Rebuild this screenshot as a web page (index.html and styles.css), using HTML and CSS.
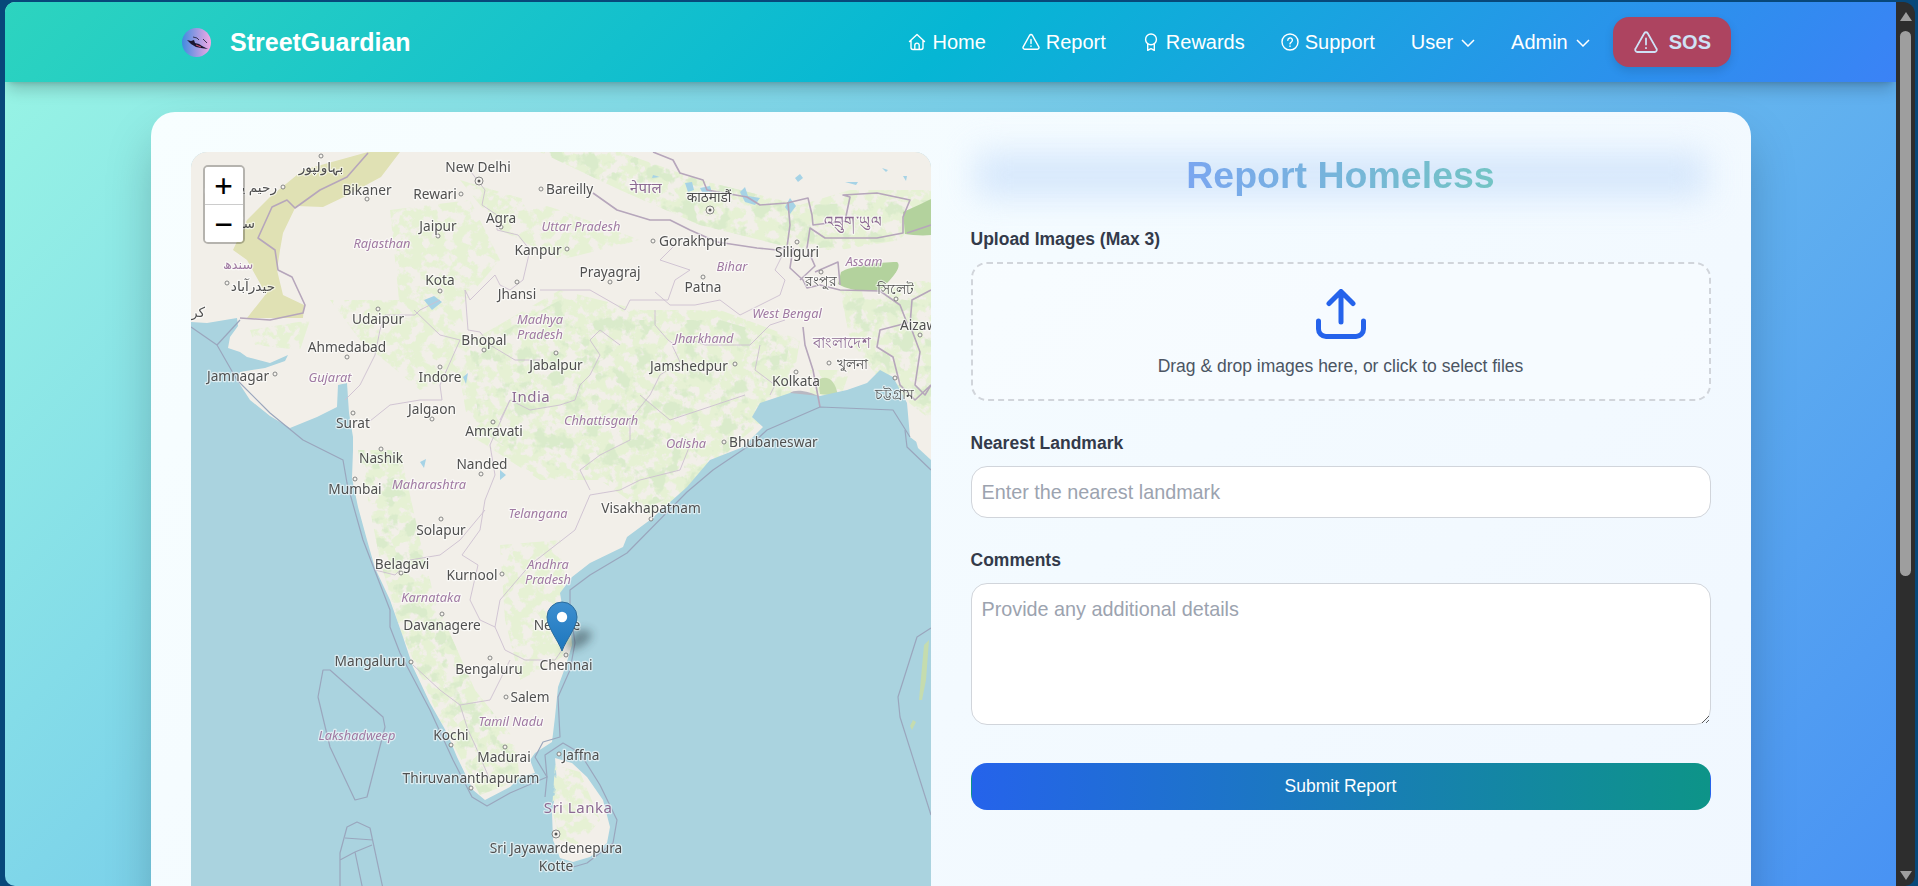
FILE: index.html
```html
<!DOCTYPE html>
<html>
<head>
    <meta name="viewport" content="width=device-width, initial-scale=1.0">
    <title>StreetGuardian</title>
    <link rel="stylesheet" href="styles.css">
</head>
<body>
<div class="window">
    <div class="page">
        <header class="navbar">
            <div class="brand">
                <svg class="brand-logo" viewBox="0 0 29 29">
                    <defs>
                        <linearGradient id="logoBg" x1="0" y1="0" x2="1" y2="0">
                            <stop offset="0" stop-color="#3f8be0"/>
                            <stop offset="1" stop-color="#f4a8e4"/>
                        </linearGradient>
                    </defs>
                    <circle cx="14.5" cy="14.5" r="14.5" fill="url(#logoBg)"/>
                    <path d="M5 12 L9 13 L12 12 L13 15 L17 16 L20 18 L26 21 L19 20 L14 19 L9 16 Z" fill="#1b1730"/>
                    <path d="M11 9 L15 10 L17 12 M21 11 L25 15" stroke="#1b1730" stroke-width="0.8" fill="none"/>
                    <path d="M14 17 L19 19" stroke="#c9486b" stroke-width="1"/>
                </svg>
                <span class="brand-name">StreetGuardian</span>
            </div>
            <nav class="nav-links">
                <a class="nav-link">
                    <svg class="nav-icon" viewBox="0 0 18 18"><path d="M1.5 8.5 9 1.5l7.5 7M3 7v7.5a2 2 0 0 0 2 2h8a2 2 0 0 0 2-2V7M6.8 16.5v-4.2a2.2 2.2 0 0 1 4.4 0v4.2"/></svg>
                    Home
                </a>
                <a class="nav-link">
                    <svg class="nav-icon" viewBox="0 0 18 18"><path d="M7.6 2.4 1.2 13.8a1.6 1.6 0 0 0 1.4 2.4h12.8a1.6 1.6 0 0 0 1.4-2.4L10.4 2.4a1.6 1.6 0 0 0-2.8 0ZM9 6.5v4M9 13v.4"/></svg>
                    Report
                </a>
                <a class="nav-link">
                    <svg class="nav-icon" viewBox="0 0 18 18"><circle cx="9" cy="6.4" r="5.4"/><path d="M5.7 10.8v6.6l3.3-1.8 3.3 1.8v-6.6"/></svg>
                    Rewards
                </a>
                <a class="nav-link">
                    <svg class="nav-icon" viewBox="0 0 18 18"><circle cx="9" cy="9" r="8"/><path d="M6.8 7.2a2.3 2.3 0 1 1 3.3 2.1c-.7.4-1.1.8-1.1 1.6M9 13v.4"/></svg>
                    Support
                </a>
                <a class="nav-link menu">
                    User
                    <svg class="chevron" viewBox="0 0 14 8"><path d="M1 1l6 6 6-6"/></svg>
                </a>
                <a class="nav-link menu">
                    Admin
                    <svg class="chevron" viewBox="0 0 14 8"><path d="M1 1l6 6 6-6"/></svg>
                </a>
                <button class="sos">
                    <svg class="sos-icon" viewBox="0 0 24 22"><path d="M10.3 2.2 1.6 17.6A2.2 2.2 0 0 0 3.5 21h17a2.2 2.2 0 0 0 1.9-3.4L13.7 2.2a2 2 0 0 0-3.4 0ZM12 7.5v6M12 16.8v.4"/></svg>
                    SOS
                </button>
            </nav>
        </header>

        <main class="content">
            <div class="card">
                <div class="map">
                    <svg class="map-svg" viewBox="191 152 740 760">
                        <defs>
                            <filter id="patchy" x="0" y="0" width="100%" height="100%">
                                <feTurbulence type="fractalNoise" baseFrequency="0.09" numOctaves="4" seed="7" result="n"/>
                                <feColorMatrix in="n" type="matrix" values="0 0 0 0 0.79  0 0 0 0 0.88  0 0 0 0 0.66  8 0 0 0 -3.3" result="g"/>
                                <feComposite in="g" in2="SourceAlpha" operator="in"/>
                            </filter>
                            <filter id="patchyDark" x="0" y="0" width="100%" height="100%">
                                <feTurbulence type="fractalNoise" baseFrequency="0.06" numOctaves="4" seed="23" result="n"/>
                                <feColorMatrix in="n" type="matrix" values="0 0 0 0 0.70  0 0 0 0 0.83  0 0 0 0 0.60  9 0 0 0 -4.9" result="g"/>
                                <feComposite in="g" in2="SourceAlpha" operator="in"/>
                            </filter>
                            <filter id="soft"><feGaussianBlur stdDeviation="0.5"/></filter>
                            <filter id="softText"><feGaussianBlur stdDeviation="0.25"/></filter>
                        </defs>
                        <rect x="191" y="152" width="740" height="760" fill="#f2efe9"/>

                        <g filter="url(#soft)">
                            <path class="desert" d="M368 152 L400 152 L381 177 L346 196 L323 207 L296 206 L283 233 L280 250 L277 270 L283 295 L304 305 L303 318 L247 318 L266 294 L247 260 L233 250 L247 220 L270 197 L303 170 Z"/>

                            <g filter="url(#patchy)">
                                <path d="M540 152 L620 190 L700 225 L800 250 L840 250 L900 240 L931 200 L931 190 L850 190 L800 205 L700 180 L620 152 Z"/>
                                <path d="M455 350 L560 290 L640 310 L720 310 L800 340 L790 400 L740 440 L690 490 L650 515 L600 480 L540 480 L470 435 Z"/>
                                <path d="M358 450 L400 450 L420 540 L435 600 L475 690 L515 740 L520 780 L480 795 L440 720 L400 630 L380 560 Z"/>
                                <path d="M500 545 L560 540 L575 650 L520 680 L505 620 Z"/>
                                <path d="M390 210 L470 200 L500 260 L440 330 L400 310 Z"/>
                                <path d="M840 290 L931 280 L931 420 L880 380 L850 340 Z"/>
                                <path d="M810 370 L850 370 L840 400 L810 400 Z"/>
                                <path d="M555 760 L590 770 L605 830 L565 850 L552 810 Z"/>
                                <path d="M250 330 L310 320 L300 350 L255 345 Z"/>
                                <path d="M330 300 L460 300 L470 370 L420 390 L360 340 Z"/>
                                <path d="M460 180 L560 210 L640 240 L560 260 L500 230 Z"/>
                            </g>
                            <g filter="url(#patchyDark)">
                                <path d="M540 152 L620 190 L700 225 L800 250 L900 240 L931 200 L800 205 L700 180 L620 152 Z"/>
                                <path d="M470 350 L560 300 L640 320 L720 320 L790 340 L780 400 L740 440 L690 490 L640 510 L600 470 L540 470 L480 430 Z"/>
                                <path d="M358 450 L400 450 L420 540 L435 600 L475 690 L515 740 L520 780 L480 795 L440 720 L400 630 L380 560 Z"/>
                                <path d="M840 300 L931 290 L931 420 L880 380 Z"/>
                            </g>

                            <path class="forest" d="M841 272 C850 266 880 262 897 262 C902 266 895 276 880 290 C865 292 850 291 838 284 Z"/>
                            <path class="forest" d="M903 212 C912 208 925 202 931 199 L931 235 C922 236 912 235 905 234 Z"/>
                            <path class="mangrove" d="M790 393 C795 388 812 392 818 396 L816 402 C806 400 796 400 790 399 Z"/>
                            <path class="forest light" d="M818 380 C826 375 835 378 838 396 L820 394 Z"/>

                            <path class="lake" d="M795 178 L800 174 L803 178 L798 182 Z M740 192 L745 187 L748 196 L760 198 L755 205 L745 202 Z M700 188 L710 186 L712 192 L702 192 Z M785 207 L790 198 L796 206 L790 214 Z M882 168 L888 170 L886 172 Z M845 182 L858 182 L856 185 Z M903 176 L907 176 L906 181 Z M653 175 L660 177 L652 178 Z M685 183 L692 182 L694 190 L688 192 Z M424 300 L434 296 L442 302 L432 310 Z M463 377 L468 373 L466 384 Z M420 462 L426 459 L424 468 Z M558 368 Z M500 470 L506 475 L500 480 Z"/>

                            <!-- sea -->
                            <path class="sea" d="M191 322 L207 323 L237 318 L238 326 L230 337 L228 348 L240 352 L247 357 L270 363 L288 355 L285 361 L265 368 L240 372 L237 380 L250 400 L270 416 L290 428 L317 417 L337 407 L338 385 L347 383 L349 413 L353 437 L353 450 L352 478 L358 507 L367 540 L375 568 L390 600 L403 637 L413 667 L430 703 L447 733 L457 757 L473 790 L485 800 L510 787 L520 777 L535 773 L530 760 L535 753 L552 742 L555 717 L558 687 L566 665 L572 645 L570 620 L562 605 L560 593 L572 577 L590 563 L623 547 L627 537 L650 520 L687 487 L710 460 L743 447 L763 427 L752 417 L760 403 L790 393 L820 396 L847 390 L867 383 L880 370 L893 377 L907 403 L910 437 L927 450 L931 455 L931 912 L191 912 Z"/>
                            <path class="land" d="M555 758 L572 763 L587 777 L603 800 L610 827 L607 843 L590 857 L573 862 L560 858 L553 840 L552 813 L557 783 Z"/>
                            <path class="land" d="M913 430 L931 430 L931 460 L918 448 Z"/>

                            <g filter="url(#patchy)">
                                <path d="M555 765 L580 772 L600 820 L580 845 L560 840 L552 810 Z"/>
                            </g>
                            <path class="forest light" d="M924 645 L929 640 L926 680 L922 700 L919 700 Z M913 720 L916 722 L912 730 L910 726 Z"/>

                            <!-- country borders -->
                            <path class="border" d="M368 153 L347 177 L320 190 L295 208 L287 200 L272 207 L258 238 L275 250 L278 270 L292 277 L305 305 L303 313 L270 320 L240 318"/>
                            <path class="border" d="M653 152 L673 160 L680 173 L703 180 L707 190 L747 197 L760 205 L787 203 L808 198 L812 215 L813 225 L845 221 L850 197 L843 195 L877 193 L910 200 L903 217 L903 233 L877 238 L825 238 L810 228 L807 248 L815 266 L800 280"/>
                            <path class="border" d="M593 193 L617 210 L650 220 L670 220 L690 230 L717 242 L757 248 L777 250 L787 247 L790 225 L788 203"/>
                            <path class="border" d="M793 248 L790 268 L803 280 L807 288 L820 285 L840 290 L880 291 L900 305 L907 323 L880 330 L877 347 L893 357 L900 385 L915 400 L931 385"/>
                            <path class="border" d="M815 272 L838 262 L840 285"/>
                            <path class="border" d="M803 327 L805 345 L813 370 L820 407"/>
                            <path class="border" d="M907 233 L931 225 M931 290 L912 300 L910 325 L920 352 L915 385 L925 395 L931 385"/>

                            <!-- state borders -->
                            <path class="state" d="M468 168 L485 190 L482 205 L497 215 L497 230 L518 235 L530 250 L523 280 L510 290 L500 285 L495 275 L470 300 L465 290 L468 330 L480 332 L490 345 L515 360 L540 360"/>
                            <path class="state" d="M414 310 L440 335 L460 340 L440 385 L442 400 L420 400 L390 405 L365 425"/>
                            <path class="state" d="M345 400 L360 385 L375 355 L380 330 L385 315 L415 315 L420 310 L440 300"/>
                            <path class="state" d="M540 290 L575 290 L590 290 L625 310 L630 300 L668 300 L675 280 L690 270 L660 260 L675 245"/>
                            <path class="state" d="M655 292 L670 305 L695 305 L720 300 L740 315 L780 295 L785 280 L775 270 L785 250"/>
                            <path class="state" d="M655 310 L655 325 L668 340 L675 345 L678 335 L705 345 L750 345 L770 325 L785 320"/>
                            <path class="state" d="M760 345 L755 370 L775 385 L770 395"/>
                            <path class="state" d="M620 345 L600 330 L590 340 L600 355 L590 375 L580 385 L575 400 L560 405 L530 410 L510 400 L500 420"/>
                            <path class="state" d="M672 345 L680 362 L660 375 L650 395 L630 420 L630 440 L600 455 L580 470 L590 490"/>
                            <path class="state" d="M640 395 L670 420 L700 410 L730 400 L745 395"/>
                            <path class="state" d="M510 400 L490 445 L495 475 L485 500 L480 530 L462 555 L478 565 L470 600 L480 620 L495 627 L500 600 L530 565 L575 530 L590 495 L620 490 L640 480 L680 470 L690 445"/>
                            <path class="state" d="M495 627 L505 650 L525 660 L555 660 L562 650"/>
                            <path class="state" d="M375 570 L395 575 L410 560 L440 555 L460 540 L485 510"/>
                            <path class="state" d="M413 665 L440 690 L460 705 L490 700 L510 660"/>
                            <path class="state" d="M460 705 L468 730 L475 745 L490 780"/>

                            <!-- maritime lines -->
                            <path class="sealine" d="M191 327 L217 345 L237 380 L270 413 L303 440 L343 460 L347 483 L363 540 L390 610 L390 627 L400 653 L430 710 L453 760 L472 797 L487 806 L510 793 L547 777 L535 757 L543 742 L560 737 L558 697 L570 670 L575 643 L570 607 L570 590 L590 575 L627 553 L687 492 L713 470 L753 443 L767 430 L820 407 L893 410 L910 437"/>
                            <path class="sealine" d="M217 345 L240 320"/>
                            <path class="sealine" d="M547 777 L545 755 L563 743 L580 753 L600 785 L617 820 L613 843 L587 863 L563 870 M547 777 L545 797"/>
                            <path class="sealine" d="M318 697 L323 670 L330 670 L383 717 L385 727 L367 797 L355 800 L330 747 Z"/>
                            <path class="sealine" d="M340 912 L340 853 L347 827 L357 822 L370 828 L388 912 M345 838 L373 840 M340 860 L355 852 L372 845 M355 852 L365 900"/>
                            <path class="sealine" d="M931 628 L917 637 L898 697 L900 717 L931 815 M905 430 L907 447 L931 470"/>
                        </g>

                        <g class="dots">
                            <circle cx="479" cy="181" r="4"/><circle cx="479" cy="181" r="1.5" class="fill"/>
                            <circle cx="367" cy="199" r="2"/><circle cx="461" cy="194" r="2"/><circle cx="541" cy="189" r="2"/>
                            <circle cx="438" cy="236" r="2"/><circle cx="501" cy="227" r="2"/><circle cx="567" cy="249" r="2"/>
                            <circle cx="610" cy="282" r="2"/><circle cx="440" cy="291" r="2"/><circle cx="517" cy="282" r="2"/>
                            <circle cx="378" cy="309" r="2"/><circle cx="347" cy="357" r="2"/><circle cx="484" cy="350" r="2"/>
                            <circle cx="556" cy="353" r="2"/><circle cx="440" cy="367" r="2"/><circle cx="275" cy="374" r="2"/>
                            <circle cx="432" cy="419" r="2"/><circle cx="353" cy="413" r="2"/><circle cx="493" cy="422" r="2"/>
                            <circle cx="381" cy="449" r="2"/><circle cx="481" cy="474" r="2"/><circle cx="355" cy="479" r="2"/>
                            <circle cx="441" cy="519" r="2"/><circle cx="401" cy="573" r="2"/><circle cx="502" cy="574" r="2"/>
                            <circle cx="442" cy="614" r="2"/><circle cx="411" cy="662" r="2"/><circle cx="490" cy="658" r="2"/>
                            <circle cx="566" cy="655" r="2"/><circle cx="506" cy="697" r="2"/><circle cx="451" cy="745" r="2"/>
                            <circle cx="505" cy="747" r="2"/><circle cx="559" cy="754" r="2"/><circle cx="471" cy="788" r="2"/>
                            <circle cx="556" cy="834" r="4"/><circle cx="556" cy="834" r="1.5" class="fill"/>
                            <circle cx="651" cy="519" r="2"/><circle cx="724" cy="442" r="2"/>
                            <circle cx="710" cy="210" r="4"/><circle cx="710" cy="210" r="1.5" class="fill"/>
                            <circle cx="653" cy="241" r="2"/><circle cx="797" cy="242" r="2"/><circle cx="703" cy="277" r="2"/>
                            <circle cx="821" cy="272" r="2"/><circle cx="896" cy="299" r="2"/><circle cx="920" cy="335" r="2"/>
                            <circle cx="735" cy="364" r="2"/><circle cx="829" cy="363" r="2"/><circle cx="796" cy="372" r="2"/>
                            <circle cx="895" cy="378" r="2"/><circle cx="321" cy="156" r="2"/><circle cx="283" cy="187" r="2"/>
                            <circle cx="227" cy="283" r="2"/>
                        </g>

                        <g class="cities" filter="url(#softText)">
                            <text x="478" y="172">New Delhi</text>
                            <text x="367" y="195">Bikaner</text>
                            <text x="435" y="199">Rewari</text>
                            <text x="546" y="194" class="start">Bareilly</text>
                            <text x="438" y="231">Jaipur</text>
                            <text x="501" y="223">Agra</text>
                            <text x="538" y="255">Kanpur</text>
                            <text x="610" y="277">Prayagraj</text>
                            <text x="440" y="285">Kota</text>
                            <text x="517" y="299">Jhansi</text>
                            <text x="378" y="324">Udaipur</text>
                            <text x="347" y="352">Ahmedabad</text>
                            <text x="484" y="345">Bhopal</text>
                            <text x="556" y="370">Jabalpur</text>
                            <text x="440" y="382">Indore</text>
                            <text x="238" y="381">Jamnagar</text>
                            <text x="432" y="414">Jalgaon</text>
                            <text x="353" y="428">Surat</text>
                            <text x="494" y="436">Amravati</text>
                            <text x="381" y="463">Nashik</text>
                            <text x="482" y="469">Nanded</text>
                            <text x="355" y="494">Mumbai</text>
                            <text x="441" y="535">Solapur</text>
                            <text x="402" y="569">Belagavi</text>
                            <text x="472" y="580">Kurnool</text>
                            <text x="442" y="630">Davanagere</text>
                            <text x="557" y="630">Nellore</text>
                            <text x="370" y="666">Mangaluru</text>
                            <text x="489" y="674">Bengaluru</text>
                            <text x="566" y="670">Chennai</text>
                            <text x="530" y="702">Salem</text>
                            <text x="451" y="740">Kochi</text>
                            <text x="504" y="762">Madurai</text>
                            <text x="581" y="760">Jaffna</text>
                            <text x="471" y="783">Thiruvananthapuram</text>
                            <text x="556" y="853">Sri Jayawardenepura</text>
                            <text x="556" y="871">Kotte</text>
                            <text x="651" y="513">Visakhapatnam</text>
                            <text x="729" y="447" class="start">Bhubaneswar</text>
                            <text x="709" y="202">काठमाडौं</text>
                            <text x="659" y="246" class="start">Gorakhpur</text>
                            <text x="797" y="257">Siliguri</text>
                            <text x="703" y="292">Patna</text>
                            <text x="821" y="286">রংপুর</text>
                            <text x="895" y="294">সিলেট</text>
                            <text x="900" y="330" class="start">Aizawl</text>
                            <text x="689" y="371">Jamshedpur</text>
                            <text x="837" y="369" class="start">খুলনা</text>
                            <text x="796" y="386">Kolkata</text>
                            <text x="894" y="399">চট্টগ্রাম</text>
                            <text x="321" y="172">بہاولپور</text>
                            <text x="277" y="192" class="end">رحیم یار خان</text>
                            <text x="255" y="228" class="end">سکھر</text>
                            <text x="253" y="291">حیدرآباد</text>
                            <text x="205" y="317" class="end">کراچی</text>
                        </g>

                        <g class="regions" filter="url(#softText)">
                            <text x="382" y="248">Rajasthan</text>
                            <text x="581" y="231">Uttar Pradesh</text>
                            <text x="540" y="324">Madhya</text>
                            <text x="540" y="339">Pradesh</text>
                            <text x="330" y="382">Gujarat</text>
                            <text x="601" y="425">Chhattisgarh</text>
                            <text x="429" y="489">Maharashtra</text>
                            <text x="538" y="518">Telangana</text>
                            <text x="548" y="569">Andhra</text>
                            <text x="548" y="584">Pradesh</text>
                            <text x="431" y="602">Karnataka</text>
                            <text x="511" y="726">Tamil Nadu</text>
                            <text x="357" y="740">Lakshadweep</text>
                            <text x="686" y="448">Odisha</text>
                            <text x="732" y="271">Bihar</text>
                            <text x="864" y="266">Assam</text>
                            <text x="787" y="318">West Bengal</text>
                            <text x="704" y="343">Jharkhand</text>
                            <text x="238" y="269" class="plain">سندھ</text>
                        </g>

                        <g class="countries" filter="url(#softText)">
                            <text x="531" y="402">India</text>
                            <text x="578" y="813">Sri Lanka</text>
                            <text x="646" y="193">नेपाल</text>
                            <text x="842" y="348">বাংলাদেশ</text>
                            <text x="853" y="227">འབྲུག་ཡུལ</text>
                        </g>
                    </svg>

                    <div class="zoom-box">
                        <a class="zoom-btn">+</a>
                        <a class="zoom-btn">&#x2212;</a>
                    </div>

                    <svg class="marker" viewBox="0 0 60 52">
                        <defs>
                            <linearGradient id="pinFill" x1="0" y1="0" x2="0" y2="1">
                                <stop offset="0" stop-color="#3d8fd0"/>
                                <stop offset="1" stop-color="#1d76bd"/>
                            </linearGradient>
                            <filter id="pinShadow" x="-80%" y="-80%" width="260%" height="260%"><feGaussianBlur stdDeviation="5"/></filter>
                        </defs>
                        <path d="M17 50 L30 30 Q44 26 46 34 Q40 48 17 50Z" fill="#1c2a30" opacity="0.45" filter="url(#pinShadow)"/>
                        <path d="M16 50 C12 39 1 26 1 16 A15 15 0 0 1 31 16 C31 26 20 39 16 50 Z" fill="url(#pinFill)" stroke="#2c6c9c" stroke-width="1"/>
                        <circle cx="16" cy="16" r="5.2" fill="#fff"/>
                    </svg>
                </div>

                <div class="form-col">
                    <h1 class="form-title"><span>Report Homeless</span></h1>

                    <label class="field-label">Upload Images (Max 3)</label>
                    <div class="dropzone">
                        <svg class="upload-icon" viewBox="0 0 50 50">
                            <path d="M2.5 32v8a7.5 7.5 0 0 0 7.5 7.5h30a7.5 7.5 0 0 0 7.5-7.5v-8M25 33V3M13 14.5 25 2.5l12 12"/>
                        </svg>
                        <p class="drop-text">Drag &amp; drop images here, or click to select files</p>
                    </div>

                    <label class="field-label">Nearest Landmark</label>
                    <input class="text-input" type="text" placeholder="Enter the nearest landmark">

                    <label class="field-label">Comments</label>
                    <textarea class="text-area" placeholder="Provide any additional details"></textarea>

                    <button class="submit-btn">Submit Report</button>
                </div>
            </div>
        </main>
    </div>

    <div class="scrollbar">
        <div class="arrow-up"></div>
        <div class="thumb"></div>
        <div class="arrow-down"></div>
    </div>
</div>
</body>
</html>
```

FILE: styles.css
```css
html, body {
    margin: 0;
    height: 100%;
    overflow: hidden;
}
body {
    background-color: #07487a;
    font-family: "Liberation Sans", Arial, sans-serif;
}
.window {
    display: flex;
    height: 884px;
    margin: 2px 3px 0 5px;
    border-radius: 10px 12px 10px 10px;
    overflow: hidden;
}
.page {
    flex: 1;
    min-width: 0;
    overflow: hidden;
    height: 1345px;
    background: linear-gradient(135deg, #99f6e4, #3b82f6);
}

/* nav */
.navbar {
    position: relative;
    z-index: 2;
    display: flex;
    align-items: center;
    justify-content: space-between;
    height: 80px;
    padding: 0 165px 0 177px;
    background: linear-gradient(135deg, #2dd4bf, #06b6d4, #3b82f6);
    box-shadow: 0 10px 15px -3px rgba(0,0,0,0.2), 0 4px 6px -4px rgba(0,0,0,0.2);
}
.brand {
    display: flex;
    align-items: center;
    gap: 19px;
}
.brand-logo {
    width: 29px;
    height: 29px;
}
.brand-name {
    color: #fff;
    font-size: 25px;
    font-weight: bold;
}
.nav-links {
    display: flex;
    align-items: center;
    gap: 36px;
}
.nav-link {
    display: flex;
    align-items: center;
    gap: 6px;
    color: #fff;
    font-size: 20px;
}
.nav-icon {
    width: 18px;
    height: 18px;
    fill: none;
    stroke: #fff;
    stroke-width: 1.4;
    stroke-linecap: round;
    stroke-linejoin: round;
}
.nav-link.menu {
    gap: 8px;
}
.chevron {
    width: 14px;
    height: 8px;
    margin-top: 2px;
    fill: none;
    stroke: #fff;
    stroke-width: 1.5;
}
.sos {
    display: flex;
    align-items: center;
    gap: 11px;
    height: 50px;
    margin-left: -13px;
    padding: 0 20px 0 21px;
    border: none;
    border-radius: 16px;
    background-color: #ad4460;
    box-shadow: 0 4px 10px rgba(0,0,0,0.12);
    color: #cfe2f6;
    font-family: inherit;
    font-size: 20px;
    font-weight: bold;
}
.sos-icon {
    width: 24px;
    height: 22px;
    fill: none;
    stroke: #cfe2f6;
    stroke-width: 1.8;
    stroke-linecap: round;
    stroke-linejoin: round;
}

/* card */
.content {
    padding-top: 30px;
}
.card {
    display: grid;
    grid-template-columns: 1fr 1fr;
    gap: 40px;
    width: 1600px;
    height: 1180px;
    box-sizing: border-box;
    margin: 0 auto;
    padding: 40px;
    border-radius: 24px;
    background: linear-gradient(135deg, #f7feff, #eff6ff);
    box-shadow: 0 25px 50px -6px rgba(0,0,0,0.25);
}

/* map */
.map {
    position: relative;
    height: 760px;
    border-radius: 16px;
    overflow: hidden;
    background-color: #aad3df;
}
.map-svg {
    display: block;
    width: 740px;
    height: 760px;
}
.desert { fill: #e0e1b4; }
.forest { fill: #b3d29d; }
.forest.light { fill: #c5dcae; }
.mangrove { fill: #b9b8c2; }
.lake { fill: #a6d3e6; }
.sea { fill: #aad3df; }
.land { fill: #f2efe9; }
.border {
    fill: none;
    stroke: #b6a6bb;
    stroke-width: 1.6;
    stroke-linejoin: round;
}
.state {
    fill: none;
    stroke: #cdbfd0;
    stroke-width: 0.9;
    stroke-linejoin: round;
}
.sealine {
    fill: none;
    stroke: #9aa6bd;
    stroke-width: 1.2;
    stroke-linejoin: round;
}
.dots circle {
    fill: #f6f4ef;
    stroke: #7b7b7b;
    stroke-width: 0.9;
}
.dots circle.fill {
    fill: #555;
    stroke: none;
}
.cities text, .regions text, .countries text {
    text-anchor: middle;
    paint-order: stroke;
    stroke: rgba(255,255,255,0.6);
    stroke-width: 2.4px;
    stroke-linejoin: round;
}
.cities text {
    fill: #505050;
    font: 13.7px "Noto Sans", "DejaVu Sans", sans-serif;
}
.cities text.start { text-anchor: start; }
.cities text.end { text-anchor: end; }
.regions text {
    fill: #a07aa3;
    font: italic 12.8px "Noto Sans", "DejaVu Sans", sans-serif;
}
.regions text.plain { font-style: normal; }
.countries text {
    fill: #8c6a92;
    font: 15px "Noto Sans", "DejaVu Sans", sans-serif;
    letter-spacing: 0.5px;
}
.zoom-box {
    position: absolute;
    top: 13px;
    left: 12px;
    display: flex;
    flex-direction: column;
    width: 38px;
    border: 2px solid rgba(0,0,0,0.25);
    border-radius: 5px;
    background-clip: padding-box;
}
.zoom-btn {
    display: flex;
    align-items: center;
    justify-content: center;
    height: 37px;
    background-color: #fff;
    color: #000;
    font: 30px/37px "DejaVu Sans Mono", monospace;
}
.zoom-btn:first-child {
    border-bottom: 1px solid #ccc;
    border-radius: 3px 3px 0 0;
}
.zoom-btn:last-child {
    border-radius: 0 0 3px 3px;
}
.marker {
    position: absolute;
    top: 449px;
    left: 355px;
    width: 60px;
    height: 52px;
    overflow: visible;
}

/* form */
.form-title {
    position: relative;
    margin: 0 0 32px;
    height: 46px;
    text-align: center;
    font-size: 37.5px;
    line-height: 46px;
    font-weight: bold;
}
.form-title::before {
    content: "";
    position: absolute;
    top: 0;
    left: 4px;
    right: 4px;
    bottom: 0;
    background: #cfe3fb;
    opacity: 0.8;
    filter: blur(16px);
}
.form-title span {
    position: relative;
    background: linear-gradient(90deg, #7aa6f0, #73c4c4);
    -webkit-background-clip: text;
    background-clip: text;
    color: transparent;
}
.field-label {
    display: block;
    margin-bottom: 14px;
    color: #333a4a;
    font-size: 17.5px;
    line-height: 18px;
    font-weight: bold;
}
.dropzone {
    display: flex;
    flex-direction: column;
    align-items: center;
    height: 139px;
    box-sizing: border-box;
    margin-bottom: 33px;
    padding-top: 25px;
    border: 2px dashed #d1d5db;
    border-radius: 16px;
    background-color: rgba(255,255,255,0.3);
}
.upload-icon {
    width: 50px;
    height: 50px;
    fill: none;
    stroke: #2563eb;
    stroke-width: 5;
    stroke-linecap: round;
    stroke-linejoin: round;
}
.drop-text {
    margin: 17px 0 0;
    color: #4b5563;
    font-size: 17.5px;
    line-height: 20px;
}
.text-input, .text-area {
    display: block;
    width: 100%;
    box-sizing: border-box;
    padding: 0 10px;
    border: 1.5px solid #d1d5db;
    border-radius: 16px;
    background-color: #fff;
    color: #374151;
    font-family: inherit;
    font-size: 19.8px;
    outline: none;
}
.text-input {
    height: 52px;
    margin-bottom: 33px;
}
.text-area {
    height: 142px;
    margin-bottom: 38px;
    padding-top: 14px;
    line-height: 23px;
}
.text-input::placeholder, .text-area::placeholder {
    color: #9ca3af;
}
.submit-btn {
    display: block;
    width: 100%;
    height: 47px;
    border: 1px solid transparent;
    border-radius: 16px;
    background: linear-gradient(90deg, #2563eb, #0d9488);
    color: #fff;
    font-family: inherit;
    font-size: 17.5px;
    font-weight: 500;
}

/* scrollbar */
.scrollbar {
    display: flex;
    flex-direction: column;
    align-items: center;
    flex: 0 0 19px;
    height: 884px;
    background-color: #2d2d2d;
}
.arrow-up {
    width: 0;
    height: 0;
    margin-top: 10px;
    border-left: 6px solid transparent;
    border-right: 6px solid transparent;
    border-bottom: 9px solid #9e9e9e;
}
.thumb {
    width: 11px;
    height: 545px;
    margin-top: 10px;
    border-radius: 6px;
    background-color: #9e9e9e;
}
.arrow-down {
    width: 0;
    height: 0;
    margin-top: auto;
    margin-bottom: 6px;
    border-left: 6px solid transparent;
    border-right: 6px solid transparent;
    border-top: 9px solid #9e9e9e;
}
```
